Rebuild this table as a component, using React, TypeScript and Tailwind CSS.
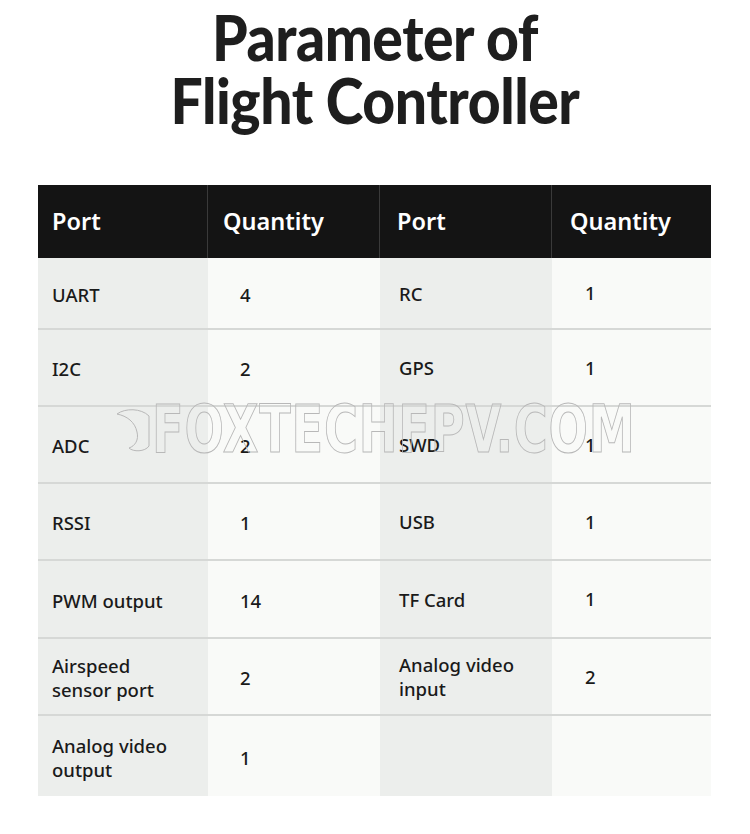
import React from "react";

const rows: [string, string, string, string][] = [
  ["UART", "4", "RC", "1"],
  ["I2C", "2", "GPS", "1"],
  ["ADC", "2", "SWD", "1"],
  ["RSSI", "1", "USB", "1"],
  ["PWM output", "14", "TF Card", "1"],
  ["Airspeed\nsensor port", "2", "Analog video\ninput", "2"],
  ["Analog video\noutput", "1", "", ""],
];

const heights = ["h-[72px]", "h-[77px]", "h-[77px]", "h-[77px]", "h-[78px]", "h-[77px]", "h-[80px]"];

export default function App() {
  return (
    <div className="w-[750px] h-[834px] bg-white relative overflow-hidden" style={{ fontFamily: '"Noto Sans", sans-serif' }}>
      <div className="pt-[6px] flex flex-col items-center text-[#1e1e1e] font-black text-[62px] leading-[63px] tracking-[-0.5px] scale-x-[0.92] origin-center" style={{ fontFamily: 'Lato, sans-serif' }}>
        <div>Parameter of</div>
        <div>Flight Controller</div>
      </div>
      <div className="mt-[53px] ml-[38px] w-[673px]">
        <div className="grid grid-cols-[170px_172px_172px_159px] h-[73px] bg-[#141414] text-white text-[23.5px] font-semibold">
          <div className="flex items-center pl-[14px] border-r border-[#3a3a3a]">Port</div>
          <div className="flex items-center pl-[15px] border-r border-[#3a3a3a]">Quantity</div>
          <div className="flex items-center pl-[17px] border-r border-[#3a3a3a]">Port</div>
          <div className="flex items-center pl-[18px]">Quantity</div>
        </div>
        {rows.map((r, i) => (
          <div
            key={i}
            className={`grid grid-cols-[170px_172px_172px_159px] ${heights[i]} text-[18.5px] font-medium text-[#1a1a1a] leading-[24px] ${i < rows.length - 1 ? "border-b-2 border-[#d6d8d6]" : ""}`}
          >
            <div className="bg-[#eceeec] flex items-center pl-[14px] pt-[3px] whitespace-pre-line">{r[0]}</div>
            <div className="bg-[#f9faf8] flex items-center pl-[32px] pt-[3px]">{r[1]}</div>
            <div className="bg-[#eceeec] flex items-center pl-[19px] pt-[1px] whitespace-pre-line">{r[2]}</div>
            <div className="bg-[#f9faf8] flex items-center pl-[33px]">{r[3]}</div>
          </div>
        ))}
      </div>
      <svg className="absolute left-[115px] top-[402px] pointer-events-none" width="50" height="50" viewBox="0 0 50 50" fill="none" stroke="#b8b8b8" strokeWidth="1">
        <path d="M2 12 C10 6 26 6 34 14 L34 44 C30 50 18 50 14 46 C20 44 24 38 22 30 C20 20 12 14 2 12 Z" />
      </svg>
      <div
        className="absolute left-[152px] top-[380px] w-[520px] text-center text-[66px] font-bold text-transparent tracking-[1px] [-webkit-text-stroke:1px_#b8b8b8] scale-x-[0.78] origin-left pointer-events-none"
        style={{ fontFamily: '"DejaVu Sans Condensed", "DejaVu Sans", sans-serif' }}
      >
        FOXTECHFPV.COM
      </div>
    </div>
  );
}
